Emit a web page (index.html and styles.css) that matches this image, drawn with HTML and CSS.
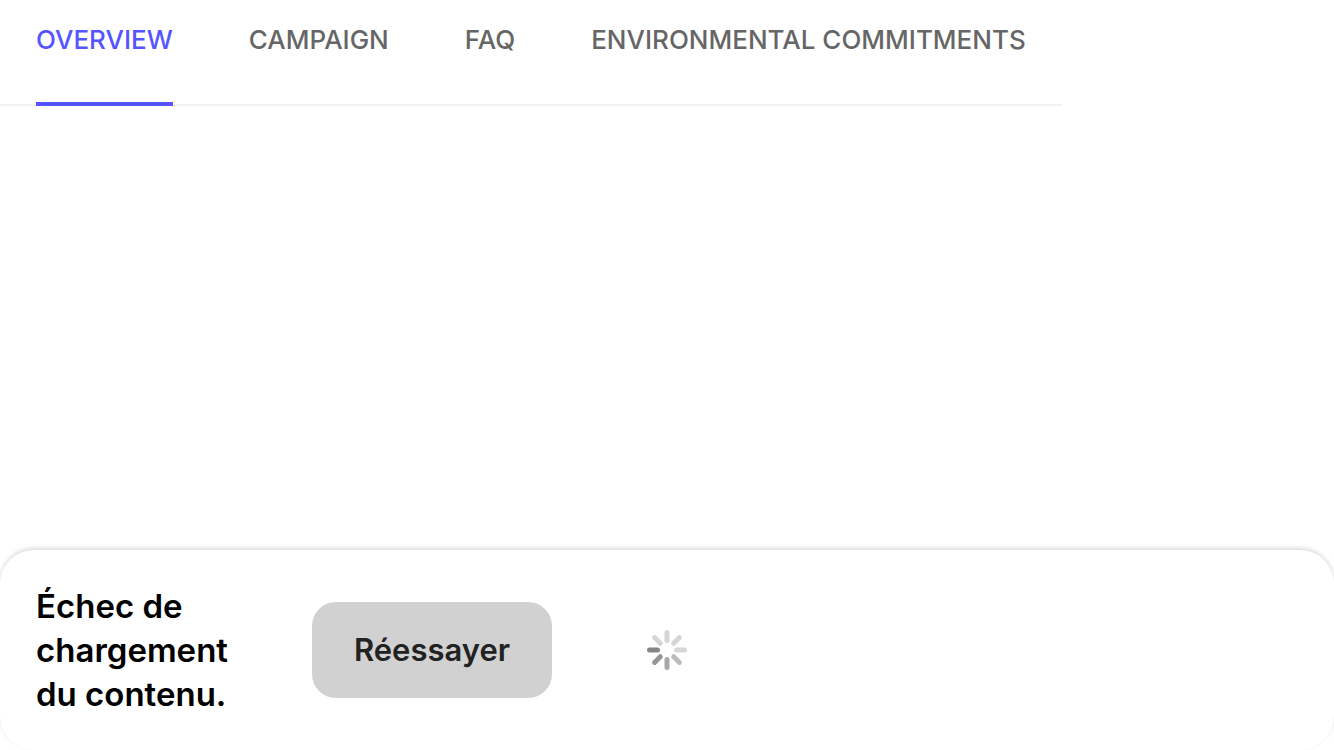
FILE: index.html
```html
<!DOCTYPE html>
<html lang="fr">
<head>
<meta charset="utf-8">
<meta name="viewport" content="width=device-width, initial-scale=1">
<title>Overview</title>
<link rel="stylesheet" href="styles.css">
</head>
<body>
<nav class="tabs" aria-label="Sections">
  <a class="tab tab-active" href="#overview" aria-current="page">OVERVIEW</a>
  <a class="tab" href="#campaign">CAMPAIGN</a>
  <a class="tab" href="#faq">FAQ</a>
  <a class="tab" href="#commitments">ENVIRONMENTAL COMMITMENTS</a>
</nav>
<main class="content"></main>
<section class="sheet" role="alert">
  <div class="notice">
    <p class="message">Échec de chargement du contenu.</p>
    <button class="retry" type="button">Réessayer</button>
  </div>
  <svg class="spinner" viewBox="0 0 40 40" fill="none" stroke-width="5" stroke-linecap="round" aria-hidden="true">
    <path d="M20 2.5v8" stroke="#d6d6d6"/>
    <path d="M32.4 7.6l-5.7 5.7" stroke="#d6d6d6"/>
    <path d="M37.5 20h-8" stroke="#d6d6d6"/>
    <path d="M32.4 32.4l-5.7-5.7" stroke="#bcbcbc"/>
    <path d="M20 37.5v-8" stroke="#a8a8a8"/>
    <path d="M7.6 32.4l5.7-5.7" stroke="#969696"/>
    <path d="M2.5 20h8" stroke="#858585"/>
    <path d="M7.6 7.6l5.7 5.7" stroke="#d6d6d6"/>
  </svg>
</section>
</body>
</html>
```
FILE: styles.css
```css
* { box-sizing: border-box; }
body {
  margin: 0;
  min-height: 100vh;
  display: flex;
  flex-direction: column;
  overflow-x: hidden;
  background: #fff;
  color: #000;
  font-family: Inter, "Liberation Sans", sans-serif;
}
.tabs {
  display: flex;
  align-self: flex-start;
  gap: 76px;
  padding: 0 36px;
  border-bottom: 2px solid #f2f2f2;
}
.tab {
  padding: 24px 0 46px;
  margin-bottom: -2px;
  border-bottom: 4px solid transparent;
  color: #666;
  font-size: 26px;
  line-height: 32px;
  font-weight: 500;
  text-decoration: none;
  white-space: nowrap;
}
.tab-active {
  border-color: #5555ff;
  color: #5555ff;
}
.content { flex: 1; }
.sheet {
  display: grid;
  grid-template-columns: 1fr auto 1fr;
  align-items: center;
  padding: 34px 36px;
  border-radius: 34px;
  background: #fff;
  box-shadow: 0 -2px 4px rgba(0, 0, 0, 0.14);
}
.notice {
  display: flex;
  align-items: center;
  gap: 76px;
}
.message {
  width: 200px;
  margin: 0;
  font-size: 33px;
  line-height: 44px;
  font-weight: 600;
}
.retry {
  width: 240px;
  height: 96px;
  border: 0;
  border-radius: 24px;
  background: #d1d1d1;
  color: #222;
  font: 600 31px/40px Inter, "Liberation Sans", sans-serif;
}
.spinner {
  width: 40px;
  height: 40px;
}
```
